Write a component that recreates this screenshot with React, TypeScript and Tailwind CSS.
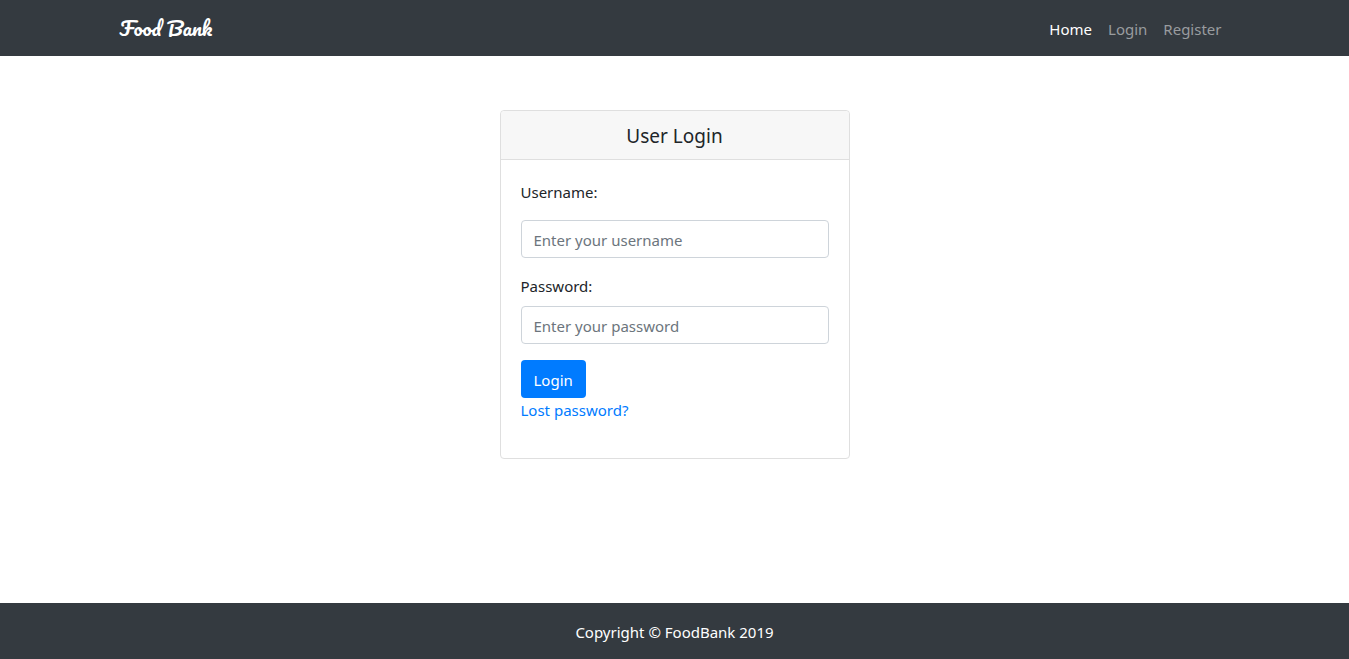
const inputClass =
  'block h-[38px] w-full rounded border border-[#ced4da] bg-white px-3 pt-0.5 text-[15px] leading-6 text-[#495057] placeholder:text-[#6c757d] focus:border-[#80bdff] focus:outline-none';

function Header() {
  return (
    <header className="bg-[#343a40]">
      <div className="mx-auto flex min-h-14 max-w-[1140px] items-center justify-between px-[15px]">
        <a
          href="#home"
          className="font-['Pacifico','Liberation_Serif',cursive] text-xl leading-8 text-white"
        >
          Food Bank
        </a>
        <nav aria-label="Main" className="flex pt-0.5">
          <a href="#home" aria-current="page" className="px-2 text-white">
            Home
          </a>
          <a href="#login" className="px-2 text-[#999c9f] hover:text-white">
            Login
          </a>
          <a href="#register" className="px-2 text-[#999c9f] hover:text-white">
            Register
          </a>
        </nav>
      </div>
    </header>
  );
}

function LoginCard() {
  return (
    <section className="w-full max-w-[350px] rounded border border-[#dfdfdf] bg-white">
      <h1 className="rounded-t border-b border-[#dfdfdf] bg-[#f7f7f7] px-5 pt-[13px] pb-[11px] text-center text-[19px] leading-6">
        User Login
      </h1>
      <form className="px-5 pt-5 pb-9" onSubmit={(event) => event.preventDefault()}>
        <div className="mb-4">
          <label htmlFor="username" className="mb-4 block">
            Username:
          </label>
          <input id="username" type="text" placeholder="Enter your username" className={inputClass} />
        </div>
        <div className="mb-4">
          <label htmlFor="password" className="mb-2 block">
            Password:
          </label>
          <input id="password" type="password" placeholder="Enter your password" className={inputClass} />
        </div>
        <button
          type="submit"
          className="block h-[38px] cursor-pointer rounded bg-[#007bff] px-[13px] pt-0.5 text-white hover:bg-[#0069d9]"
        >
          Login
        </button>
        <a href="#lost-password" className="block text-[#007bff] hover:underline">
          Lost password?
        </a>
      </form>
    </section>
  );
}

export default function App() {
  return (
    <div className="flex min-h-screen flex-col bg-white font-['Noto_Sans','Open_Sans',sans-serif] text-[15px] leading-6 text-[#212529]">
      <Header />
      <main className="flex flex-1 items-start justify-center px-4 pt-[54px] pb-12">
        <LoginCard />
      </main>
      <footer className="bg-[#343a40] px-4 pt-[17px] pb-[15px] text-center text-white">
        Copyright © FoodBank 2019
      </footer>
    </div>
  );
}
